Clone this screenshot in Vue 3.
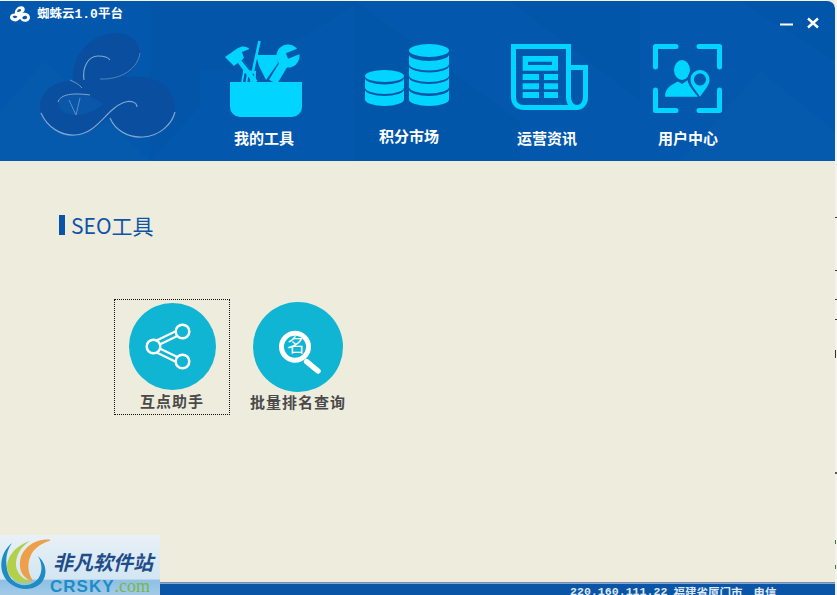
<script setup>
const navItems = [
  { label: "我的工具", box: "214 40 100 80", kind: "tools" },
  { label: "积分市场", box: "359 40 100 80", kind: "coins" },
  { label: "运营资讯", box: "497 40 100 80", kind: "news" },
  { label: "用户中心", box: "638 40 100 80", kind: "user" }
];

// one coin layer: a band with a curved top and bottom
function band(x, center, rx, ry, h) {
  const y = center - ry;
  return `M${x} ${y} A${rx} ${ry} 0 0 0 ${x + rx * 2} ${y} V${y + h} A${rx} ${ry} 0 0 1 ${x} ${y + h} Z`;
}

const coinBands = [
  band(409, 61, 20, 6.5, 9.5),
  band(409, 72.5, 20, 6.5, 9.5),
  band(409, 84, 20, 6.5, 9.5),
  band(409, 96, 20, 6.5, 10),
  band(365, 84.5, 19.5, 6.5, 9.5),
  band(365, 96, 19.5, 6.5, 10)
];

const newsRows = [74, 83.3, 92];

const outline = "M73 81C70 56 92 33 115 33C134 33 143 46 139 59C135 73 117 83 99 79C116 77 130 76 142 77C162 78 175 92 175 108C175 126 158 137 140 137C125 137 113 128 109 117C98 126 89 135 75 135C54 135 40 122 40 106C40 92 54 80 73 81Z";
</script>

<template>
  <div class="app">
    <header class="head">
      <svg class="facets" viewBox="0 0 835 160" preserveAspectRatio="none">
        <polygon points="150,0 360,0 250,70 150,70" fill="#00245a" opacity=".035" />
        <polygon points="0,160 0,110 45,60 150,160" fill="#fff" opacity=".015" />
        <polygon points="150,70 200,70 200,105 150,160" fill="#00245a" opacity=".05" />
        <polygon points="355,0 520,120 520,160 355,160" fill="#00245a" opacity=".025" />
        <polygon points="510,0 640,0 640,100" fill="#00245a" opacity=".03" />
        <polygon points="640,0 835,0 835,60 740,0" fill="#00245a" opacity=".03" />
        <polygon points="760,70 835,130 835,160 680,160" fill="#fff" opacity=".015" />
      </svg>

      <svg class="big-logo" viewBox="30 25 155 120">
        <path :d="outline" fill="#0a4f9f" />
        <path d="M41 113C47 127 61 136 75 135C92 134 101 120 112 110C118 104 127 100 133 102C136 103 137 105 137 107" fill="none" stroke="#7ea6d2" stroke-width="1.2" />
        <path d="M110 118C115 130 128 138 143 137C160 136 172 124 175 112" fill="none" stroke="#7ea6d2" stroke-width="1.2" />
        <path d="M84 80C82 68 88 56 98 56C104 56 108 57 110 60" fill="none" stroke="#7ea6d2" stroke-width="1.1" />
        <path d="M58 102C58 110 66 116 78 115C88 114 97 110 103 104C96 98 86 94 76 94C66 94 60 97 58 102Z" fill="#0a56a9" />
        <path d="M58 102C60 96 68 92 90 95" fill="none" stroke="#7ea6d2" stroke-width="1" />
        <path d="M69 100L76 115L80 98" fill="none" stroke="#5f8fc6" stroke-width="1" />
        <path d="M140 53C138 68 122 80 100 79" fill="none" stroke="#4f84bf" stroke-width="1" />
        <path d="M70 80C74 82 79 84 82 88" fill="none" stroke="#6c99cc" stroke-width="1" />
      </svg>

      <div class="title-row">
        <svg class="small-logo" viewBox="38 31 139 108">
          <path :d="outline" fill="#fff" />
          <path d="M88 72C88 60 96 52 107 52C115 52 117 58 112 64C107 69 97 72 88 72Z" fill="#0358ad" />
          <path d="M58 106C58 98 70 95 82 98C90 100 92 104 86 109C78 116 62 116 58 106Z" fill="#0358ad" />
          <path d="M122 112C128 100 142 94 152 100C160 106 156 118 142 120C134 121 126 118 122 112Z" fill="#0358ad" />
        </svg>
        <span class="title-text">蜘蛛云<b>1.0</b>平台</span>
      </div>

      <div class="win-btns">
        <svg width="40" height="12" viewBox="0 0 40 12">
          <path d="M1 7.500H14" stroke="#fff" stroke-width="2" />
          <path d="M29 1.500L39 10.500M39 1.500L29 10.500" stroke="#fff" stroke-width="2.400" />
        </svg>
      </div>

      <nav class="nav">
        <div v-for="item in navItems" :key="item.label" class="nav-item">
          <svg class="nav-icon" width="100" height="80" :viewBox="item.box">
            <g v-if="item.kind === 'tools'" fill="#00d4ff">
              <polygon points="256,55 277,55 278,63 266,80 259,66" />
              <path d="M225 57L238 48C242 45.500 247 46 249.500 49L242 52L244 58L234 66Z" />
              <path d="M237 57L256 82" stroke="#00d4ff" stroke-width="6" fill="none" />
              <g stroke="#0358ad" stroke-width="1.500" fill="none">
                <path d="M242 60L261 84" />
              </g>
              <g stroke="#00d4ff" fill="none">
                <path d="M259.500 41L253 71" stroke-width="2.600" />
                <path d="M243 71.500L256 72.500" stroke-width="3" />
                <path d="M244 72L242 82M248 72L246.500 82M251.500 72L251 82M255 72L255 82" stroke-width="1.800" />
              </g>
              <path d="M288 57L273 82" stroke="#00d4ff" stroke-width="9" fill="none" />
              <circle cx="288" cy="56" r="11.500" />
              <path d="M287 56L302 50" stroke="#0358ad" stroke-width="6" fill="none" />
              <path d="M230 82H302V107A10 10 0 0 1 292 117H240A10 10 0 0 1 230 107Z" />
            </g>

            <g v-else-if="item.kind === 'coins'" fill="#00d4ff">
              <ellipse cx="429" cy="50.500" rx="20" ry="6.500" />
              <ellipse cx="384.500" cy="76" rx="19.500" ry="6" />
              <path v-for="(d, i) in coinBands" :key="i" :d="d" />
            </g>

            <g v-else-if="item.kind === 'news'">
              <g fill="none" stroke="#00d4ff" stroke-width="5">
                <path d="M513.500 46.500H568.500V97C568.500 103 572 107.500 577 107.500H524C517 107.500 513.500 103 513.500 97Z" />
                <path d="M571 67.500H585.500V97C585.500 103 582 107.500 577 107.500" />
              </g>
              <path d="M522.700 56H558V70.700H522.700ZM528 61.700V65H552V61.700Z" fill="#00d4ff" fill-rule="evenodd" />
              <g v-for="y in newsRows" :key="y" fill="#00d4ff">
                <rect x="522.700" :y="y" width="16.300" height="6" />
                <rect x="544" :y="y" width="14" height="6" />
              </g>
            </g>

            <g v-else>
              <g fill="none" stroke="#00d4ff" stroke-width="5" stroke-linecap="round" stroke-linejoin="round">
                <path d="M676 46.500H655.500V67" />
                <path d="M699 46.500H719.500V67" />
                <path d="M655.500 90V110.500H676" />
                <path d="M719.500 90V110.500H699" />
              </g>
              <ellipse cx="682" cy="70" rx="8" ry="10" fill="#00d4ff" />
              <path d="M665 96.700C665 88 671 85 678 81.500L682 84L688 80L700 96.700Z" fill="#00d4ff" />
              <path d="M700 97C694 89 689 85 689 79.500C689 73.500 694 69 700 69C706 69 711 73.500 711 79.500C711 85 706 89 700 97Z" fill="#0358ad" stroke="#0358ad" stroke-width="3" />
              <path d="M700 96.700C695 89.500 690.500 85 690.500 79.500C690.500 74.300 694.800 70 700 70C705.200 70 709.500 74.300 709.500 79.500C709.500 85 705 89.500 700 96.700ZM700 73.500C696.700 73.500 694 76.200 694 79.500C694 82.800 696.700 85.500 700 85.500C703.300 85.500 706 82.800 706 79.500C706 76.200 703.300 73.500 700 73.500Z" fill="#00d4ff" fill-rule="evenodd" />
            </g>
          </svg>
          <span class="nav-label" :class="'label-' + item.kind">{{ item.label }}</span>
        </div>
      </nav>
    </header>

    <main class="content">
      <h2 class="section"><i class="mark"></i>SEO工具</h2>

      <div class="tools">
        <div class="tool focused">
          <div class="round small">
            <svg width="60" height="60" viewBox="0 0 60 60" fill="none">
              <path d="M13 27L40 14M13 32L40 45" stroke="#fff" stroke-width="7" />
              <path d="M13 27L40 14M13 32L40 45" stroke="#0fb5d2" stroke-width="3" />
              <circle cx="11.500" cy="29.500" r="6.800" fill="#0fb5d2" stroke="#fff" stroke-width="2.500" />
              <circle cx="40.500" cy="14.500" r="6.800" fill="#0fb5d2" stroke="#fff" stroke-width="2.500" />
              <circle cx="40.500" cy="44.500" r="6.800" fill="#0fb5d2" stroke="#fff" stroke-width="2.500" />
            </svg>
          </div>
          <span class="tool-label">互点助手</span>
        </div>

        <div class="tool">
          <div class="round">
            <svg width="60" height="60" viewBox="0 0 60 60">
              <circle cx="27" cy="29.700" r="13.500" fill="none" stroke="#fff" stroke-width="5" />
              <path d="M38.700 44.700L50 54" stroke="#fff" stroke-width="5.500" stroke-linecap="round" />
            </svg>
            <span class="glass-text">名</span>
          </div>
          <span class="tool-label">批量排名查询</span>
        </div>
      </div>
    </main>

    <footer class="status">
      <span class="ip">220.160.111.22</span>
      <span class="place">福建省厦门市</span>
      <span class="isp">电信</span>
    </footer>

    <div class="side-strip"></div>

    <div class="mark-box">
      <svg class="swirl" width="50" height="58" viewBox="0 0 50 58">
        <path d="M12 7C2 15 -1 28 3 38C9 54 32 58 42 46C48 38 46 27 38 20C44 30 42 42 33 47C22 53 9 46 7 33C5 22 7 14 12 7Z" fill="#1f8ac4" />
        <path d="M30 5C14 10 4 24 8 36C11 45 22 49 33 46C22 44 15 36 16 26C17 17 22 10 30 5Z" fill="#b3d04a" />
        <path d="M53 4C36 1 21 12 20 26C19 36 24 43 33 45C27 36 27 26 32 17C36 11 43 6 53 4Z" fill="#eda049" />
      </svg>
      <span class="mark-cn">非凡软件站</span>
      <span class="mark-en">CRSKY<em>.com</em></span>
    </div>
  </div>
</template>

<style scoped>
.app {
  position: relative;
  width: 837px;
  height: 595px;
  overflow: hidden;
  display: flex;
  flex-direction: column;
  background: #eeecdd;
  font-family: "Noto Sans CJK SC", "Liberation Sans", sans-serif;
}

.head {
  position: relative;
  flex: none;
  width: 835px;
  height: 160px;
  border-top: 1px solid #f4f4f4;
  border-top-right-radius: 8px;
  background: #0358ad;
  overflow: hidden;
}
.facets {
  position: absolute;
  left: 0;
  top: 0;
  width: 835px;
  height: 160px;
}
.big-logo {
  position: absolute;
  left: 30px;
  top: 24px;
  width: 155px;
  height: 120px;
}

.title-row {
  position: relative;
  display: flex;
  align-items: center;
  gap: 6px;
  height: 26px;
  padding-left: 9px;
}
.small-logo {
  width: 22px;
  height: 16px;
}
.title-text {
  color: #fff;
  font-size: 12.500px;
  font-weight: 700;
  line-height: 16px;
}
.title-text b {
  font-family: "Liberation Mono", monospace;
  font-size: 13px;
}

.win-btns {
  position: absolute;
  left: 779px;
  top: 16px;
  line-height: 0;
}

.nav {
  position: absolute;
  left: 194px;
  top: 39px;
  display: grid;
  grid-template-columns: 140px 150px 126px 156px;
}
.nav-item {
  display: flex;
  flex-direction: column;
  align-items: center;
}
.nav-icon {
  display: block;
}
.nav-label {
  margin-top: 8px;
  color: #fff;
  font-size: 15px;
  font-weight: 700;
  line-height: 20px;
}
.label-coins {
  margin-top: 6px;
}

.content {
  flex: 1;
  padding: 54px 0 0 59px;
}
.section {
  display: flex;
  align-items: center;
  height: 20px;
  margin: 0;
  color: #0e54a8;
  font-size: 21px;
  font-weight: 400;
  line-height: 20px;
}
.mark {
  width: 6px;
  height: 20px;
  margin-right: 6px;
  background: #0a54a8;
}

.tools {
  display: flex;
  margin: 64px 0 0 55px;
}
.tool {
  display: flex;
  flex-direction: column;
  align-items: center;
  width: 136px;
  height: 116px;
  padding-top: 3px;
  box-sizing: border-box;
}
.tool.focused {
  width: 116px;
  outline: 1px dotted #111;
  outline-offset: -1px;
}
.round {
  position: relative;
  display: flex;
  align-items: center;
  justify-content: center;
  width: 90px;
  height: 90px;
  border-radius: 50%;
  background: #0fb5d2;
}
.round.small {
  width: 87px;
  height: 87px;
  margin-top: 1px;
}
.glass-text {
  position: absolute;
  left: 31px;
  top: 30px;
  width: 24px;
  color: #fff;
  font-size: 18px;
  line-height: 24px;
  text-align: center;
}
.tool-label {
  color: #4a4a4a;
  font-size: 15px;
  font-weight: 700;
  line-height: 20px;
  letter-spacing: 1px;
  white-space: nowrap;
}
.focused .tool-label {
  margin-top: 1px;
}

.status {
  flex: none;
  display: flex;
  height: 11px;
  margin-top: 2px;
  padding-left: 570px;
  border-top: 1px solid #8fa6c6;
  box-shadow: 0 -1px 0 #6f8db8;
  background: #0a55a6;
  color: #dfe8f4;
  font-size: 11.500px;
  font-weight: 700;
  line-height: 14px;
  overflow: hidden;
  white-space: nowrap;
}
.ip {
  margin-top: 1px;
  font-family: "Liberation Mono", monospace;
  font-size: 11.600px;
}
.place {
  margin: 1px 0 0 6px;
}
.isp {
  margin: 1px 0 0 11px;
}

.side-strip {
  position: absolute;
  right: 0;
  top: 0;
  width: 2px;
  height: 595px;
  background:
    linear-gradient(#333, #333) 0 217px / 2px 1px no-repeat,
    linear-gradient(#333, #333) 0 270px / 2px 1px no-repeat,
    linear-gradient(#333, #333) 0 299px / 2px 1px no-repeat,
    linear-gradient(#333, #333) 0 319px / 2px 1px no-repeat,
    linear-gradient(#333, #333) 0 350px / 1px 8px no-repeat,
    linear-gradient(#555, #555) 0 472px / 2px 2px no-repeat,
    linear-gradient(#3a7a3a, #3a7a3a) 0 540px / 1px 4px no-repeat,
    linear-gradient(#3a7a3a, #3a7a3a) 0 565px / 1px 4px no-repeat,
    #f2f2ee;
}

.mark-box {
  position: absolute;
  left: 0;
  top: 535px;
  width: 160px;
  height: 60px;
  background: linear-gradient(#e8f1f6 0, #d3e6f2 73%, #8fbfe3 76%, #a3cbe8 100%);
}
.swirl {
  position: absolute;
  left: 0;
  top: 1px;
}
.mark-cn {
  position: absolute;
  left: 53px;
  top: 14px;
  color: #1f4d8c;
  font-size: 20px;
  font-style: italic;
  font-weight: 700;
  line-height: 26px;
  white-space: nowrap;
}
.mark-en {
  position: absolute;
  left: 50px;
  top: 43px;
  color: #1d8cc8;
  font-family: "Liberation Sans", sans-serif;
  font-size: 17px;
  font-weight: 700;
  line-height: 16px;
  letter-spacing: 1px;
  white-space: nowrap;
}
.mark-en em {
  color: #7ab648;
  font-family: "Liberation Serif", serif;
  font-size: 18px;
  font-style: normal;
  font-weight: 400;
  letter-spacing: 0;
}
</style>
